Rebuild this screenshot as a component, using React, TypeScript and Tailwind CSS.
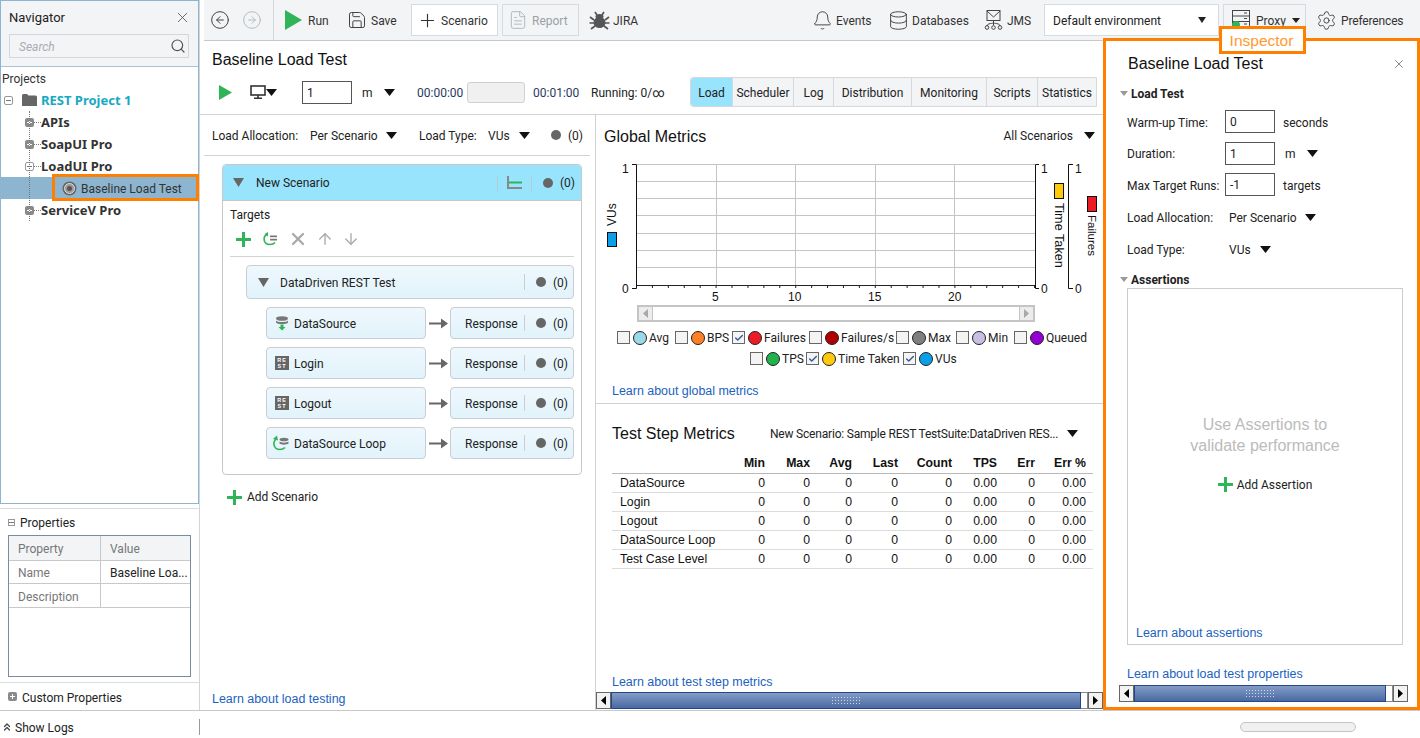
import React from "react";
import { Bell, Database, Settings, Save, Plus, FileText, CircleArrowLeft, CircleArrowRight, Search, X, ArrowUp, ArrowDown, ChevronsUp, Check } from "lucide-react";

const T = ({ className = "", children }: { className?: string; children: React.ReactNode }) => (
  <span className={"pt-[2px] " + className}>{children}</span>
);
const Caret = ({ className = "" }: { className?: string }) => (
  <svg width="11" height="7" viewBox="0 0 11 7" className={"shrink-0 " + className}><polygon points="0,0 11,0 5.5,7" fill="#111" /></svg>
);
const GrayTri = () => (
  <svg width="11" height="9" viewBox="0 0 11 9" className="shrink-0"><polygon points="0,0 11,0 5.5,9" fill="#666" /></svg>
);
const SmallTri = () => (
  <svg width="8" height="5" viewBox="0 0 8 5" className="shrink-0"><polygon points="0,0 8,0 4,5" fill="#999" /></svg>
);
const Dot = () => <span className="w-[10px] h-[10px] rounded-full bg-[#666] shrink-0" />;
const Count = ({ flat = false, gap = "gap-[7px]" }: { flat?: boolean; gap?: string }) => (
  <span className={"flex items-center text-[#222] " + gap}>
    <Dot />
    <span className={flat ? "" : "pt-[2px]"}>(0)</span>
  </span>
);
const Link = ({ children }: { children: React.ReactNode }) => (
  <span className="font-['Liberation_Sans',sans-serif] text-[12.45px] leading-[16px] text-[#1a62c0] whitespace-nowrap">{children}</span>
);
const TreeBox = ({ minus = false, dark = true }: { minus?: boolean; dark?: boolean }) => (
  <span className={"w-[9px] h-[9px] rounded-[2px] flex items-center justify-center shrink-0 " + (minus ? "bg-white border border-[#999] " : "") + (dark && !minus ? "bg-[#8a8a8a]" : "")}>
    <svg width="7" height="7" viewBox="0 0 7 7">
      <rect x="1" y="3" width="5" height="1" fill={minus ? "#777" : "#fff"} />
      {!minus && <rect x="3" y="1" width="1" height="5" fill="#fff" />}
    </svg>
  </span>
);
const RestIcon = () => (
  <span className="w-[14px] h-[14px] bg-[#666] text-white text-[5.5px] font-bold leading-[6.5px] flex flex-col items-center justify-center shrink-0 font-['Liberation_Sans',sans-serif] tracking-[1px]">
    <span>RE</span>
    <span>ST</span>
  </span>
);
const DsIcon = () => (
  <svg width="14" height="15" viewBox="0 0 14 15" className="shrink-0">
    <ellipse cx="7" cy="2.5" rx="6" ry="2.3" fill="#777" />
    <path d="M1 4.5 C2 6.5 12 6.5 13 4.5 V6.5 C12 8.5 2 8.5 1 6.5Z" fill="#777" />
    <path d="M5.5 8.5 H8.5 V11 H10.5 L7 14.5 L3.5 11 H5.5Z" fill="#2fb457" />
  </svg>
);
const LoopIcon = () => (
  <svg width="17" height="16" viewBox="0 0 17 16" className="shrink-0">
    <path d="M4 4 C0 8 2 14.5 8 14.5 C10.5 14.5 12 13.5 13 12.5" fill="none" stroke="#2fb457" strokeWidth="1.6" />
    <polygon points="1,4 5,0.5 6,5.5" fill="#2fb457" />
    <ellipse cx="12" cy="4.5" rx="4.5" ry="1.8" fill="#777" />
    <path d="M7.5 6.5 C9 8 15 8 16.5 6.5 V8.5 C15 10 9 10 7.5 8.5Z" fill="#777" />
  </svg>
);
const TargetLoop = () => (
  <svg width="16" height="14" viewBox="0 0 16 14" className="shrink-0">
    <path d="M5 2.5 C1 4 0.5 12.5 8 12.5 C10 12.5 12 11.8 13 10.5" fill="none" stroke="#2fb457" strokeWidth="1.6" />
    <polygon points="2.5,2 6,0 6,4.5" fill="#2fb457" />
    <rect x="8" y="3.5" width="7" height="1.7" fill="#777" />
    <rect x="8" y="6.8" width="7" height="1.7" fill="#777" />
  </svg>
);
const BugIcon = () => (
  <svg width="21" height="19" viewBox="0 0 21 19" className="shrink-0" fill="#555" stroke="#555">
    <ellipse cx="10.5" cy="11.5" rx="6" ry="5.5" stroke="none" />
    <ellipse cx="10.5" cy="5.5" rx="4" ry="2.5" stroke="none" />
    <path d="M6 1 L8 4 M15 1 L13 4 M1 6 L5 9 M20 6 L16 9 M0.5 12 H5 M20.5 12 H16 M2 18 L6 15 M19 18 L15 15" strokeWidth="1.7" fill="none" />
  </svg>
);
const JmsIcon = () => (
  <svg width="19" height="20" viewBox="0 0 19 20" className="shrink-0" fill="none" stroke="#444" strokeWidth="1">
    <rect x="3" y="0.5" width="13" height="10" />
    <path d="M3 1 L9.5 7 L16 1" />
    <path d="M9.5 10.5 V15 M3 16 C3 13 9.5 13.5 9.5 13 C9.5 13.5 16 13 16 16" />
    <circle cx="3" cy="17.5" r="1.8" />
    <circle cx="9.5" cy="17.5" r="1.8" />
    <circle cx="16" cy="17.5" r="1.8" />
  </svg>
);
const ProxyIcon = () => (
  <span className="relative w-[18px] h-[20px] shrink-0">
    <svg width="18" height="18" viewBox="0 0 18 18" fill="none" stroke="#444" strokeWidth="1">
      <rect x="0.5" y="0.5" width="17" height="17" />
      <path d="M0.5 6 H17.5 M0.5 11.5 H17.5 M12 3 H15 M12 8.5 H15 M12 14 H15" />
    </svg>
    <span className="absolute left-0 top-[11px] w-[8px] h-[8px] rounded-full bg-[#2fb457]" />
  </span>
);
const ArrowRightIcon = () => (
  <svg width="19" height="11" viewBox="0 0 19 11" className="shrink-0"><path d="M0 4.5 H12 V0.5 L19 5.5 L12 10.5 V6.5 H0Z" fill="#666" /></svg>
);
const GreenPlus = ({ s = 15 }: { s?: number }) => (
  <svg width={s} height={s} viewBox="0 0 15 15" className="shrink-0"><path d="M6 0 H9 V6 H15 V9 H9 V15 H6 V9 H0 V6 H6Z" fill="#2fb457" /></svg>
);

const BlueScrollbar = ({ grip }: { grip: string }) => (
  <div className="flex h-[17px] items-stretch">
    <div className="w-[15px] border border-[#666] bg-[#f2f2f2] flex items-center justify-center shrink-0">
      <svg width="5" height="9" viewBox="0 0 5 9"><polygon points="5,0 5,9 0,4.5" fill="#000" /></svg>
    </div>
    <div className="flex-1 bg-gradient-to-b from-[#849cc6] to-[#4a6aa2] border border-[#24478a] flex items-center justify-center">
      <div className={grip + " h-[10px] bg-[radial-gradient(#cdd8ec_1px,transparent_1px)] bg-[length:3px_3px]"} />
    </div>
    <div className="w-[7px] bg-white border-y border-r border-[#888] shrink-0" />
    <div className="w-[15px] border border-[#666] bg-[#f2f2f2] flex items-center justify-center shrink-0">
      <svg width="5" height="9" viewBox="0 0 5 9"><polygon points="0,0 0,9 5,4.5" fill="#000" /></svg>
    </div>
  </div>
);

const ToolItem = ({ className = "", icon, label }: { className?: string; icon: React.ReactNode; label: string }) => (
  <div className={"flex items-center h-[32px] shrink-0 " + className}>
    {icon}
    <T className="text-[#333]">{label}</T>
  </div>
);

const Toolbar = () => (
  <div className="h-[41px] ml-[4px] bg-[#f3f4f6] border-b border-[#c8c8c8] flex items-center pr-[18px] shrink-0">
    <CircleArrowLeft size={20} strokeWidth={1.2} className="ml-[6px] text-[#444] shrink-0" />
    <CircleArrowRight size={20} strokeWidth={1.2} className="ml-[12px] text-[#b3bcc4] shrink-0" />
    <div className="w-px h-[40px] bg-[#d4d8dc] ml-[11px]" />
    <ToolItem className="ml-[11px] w-[44px] gap-[6px]" icon={<svg width="17" height="20" viewBox="0 0 17 20" className="shrink-0"><polygon points="0,0 17,10 0,20" fill="#2fb457" /></svg>} label="Run" />
    <ToolItem className="ml-[20px] w-[46px] gap-[4px]" icon={<Save size={20} strokeWidth={1.2} className="text-[#444] -ml-[2px] shrink-0" />} label="Save" />
    <div className="ml-[16px] w-[87px] h-[32px] bg-white border border-[#d5dbe3] flex items-center pl-[5px] gap-[3px] text-[#333] shrink-0">
      <Plus size={21} strokeWidth={1.3} className="text-[#333] shrink-0" />
      <T>Scenario</T>
    </div>
    <div className="ml-[4px] w-[77px] h-[32px] border border-[#d5dbe3] flex items-center pl-[5px] gap-[4px] text-[#9aa0a6] shrink-0">
      <FileText size={20} strokeWidth={1.1} className="text-[#aab4c0] shrink-0" />
      <T>Report</T>
    </div>
    <ToolItem className="ml-[10px] w-[46px] gap-[3px]" icon={<BugIcon />} label="JIRA" />
    <ToolItem className="ml-auto w-[56px] gap-[3px]" icon={<Bell size={21} strokeWidth={1.1} className="text-[#444] -ml-[2px] shrink-0" />} label="Events" />
    <ToolItem className="ml-[20px] w-[75px] gap-[3px]" icon={<Database size={21} strokeWidth={1.1} className="text-[#444] -ml-[2px] shrink-0" />} label="Databases" />
    <ToolItem className="ml-[19px] w-[45px] gap-[4px]" icon={<JmsIcon />} label="JMS" />
    <div className="ml-[15px] w-[175px] h-[32px] bg-white border border-[#d5dbe3] flex items-center justify-between pl-[8px] pr-[12px] text-[#222] shrink-0">
      <T>Default environment</T>
      <svg width="8" height="6" viewBox="0 0 8 6" className="shrink-0"><polygon points="0,0 8,0 4,6" fill="#222" /></svg>
    </div>
    <div className="ml-[4px] w-[83px] h-[32px] border border-[#d5dbe3] flex items-center pl-[8px] gap-[6px] text-[#333] shrink-0">
      <ProxyIcon />
      <T>Proxy</T>
      <svg width="8" height="5" viewBox="0 0 8 5" className="shrink-0"><polygon points="0,0 8,0 4,5" fill="#222" /></svg>
    </div>
    <ToolItem className="ml-[12px] w-[84px] gap-[4px] tracking-[-0.15px]" icon={<Settings size={21} strokeWidth={1.1} className="text-[#444] -ml-[2px] shrink-0" />} label="Preferences" />
  </div>
);

const TreeRow = ({ box, minus, label }: { box?: boolean; minus?: boolean; label: string }) => (
  <div className="h-[22px] flex items-center font-bold text-[#333] pl-[24px] font-['Noto_Sans',sans-serif] text-[13px]">
    {box && <TreeBox minus={minus} />}
    <span className="w-[7px] border-t border-dotted border-[#777] shrink-0" />
    <span>{label}</span>
  </div>
);

const Navigator = () => (
  <div className="h-[504px] border border-[#8db4d0] flex flex-col shrink-0">
    <div className="h-[66px] bg-[#f3f4f6] border-b border-[#a9c3d6] shrink-0 pl-[8px] pr-[9px]">
      <div className="h-[33px] flex items-center justify-between">
        <span className="text-[13px] text-[#222]">Navigator</span>
        <X size={17} strokeWidth={1.2} className="text-[#555] -mr-[2px]" />
      </div>
      <div className="h-[24px] border border-[#d3d7dc] flex items-center justify-between px-[9px] pr-[2px]">
        <T className="italic text-[#a8adb3]">Search</T>
        <Search size={16} strokeWidth={1.8} className="text-[#555]" />
      </div>
    </div>
    <div className="relative flex-1">
      <div className="h-[22px] flex items-center pl-[1px] text-[#333]"><T>Projects</T></div>
      <div className="h-[22px] flex items-center pl-[3px]">
        <TreeBox minus />
        <svg width="15" height="12" viewBox="0 0 15 12" className="ml-[9px] shrink-0"><path d="M0 1.5 Q0 0 1.5 0 H5 L6.5 1.5 H13.5 Q15 1.5 15 3 V12 H0Z" fill="#666" /></svg>
        <span className="ml-[4px] font-bold text-[13px] text-[#17a9c4] font-['Noto_Sans',sans-serif]">REST Project 1</span>
      </div>
      <TreeRow box label="APIs" />
      <TreeRow box label="SoapUI Pro" />
      <TreeRow box minus label="LoadUI Pro" />
      <div className="relative h-[22px] bg-[#8db5cf] flex items-center pl-[61px] text-[#333] -mr-px">
        <svg width="15" height="15" viewBox="0 0 15 15" className="shrink-0">
          <circle cx="7.5" cy="7.5" r="7" fill="#666" />
          <circle cx="7.5" cy="7.5" r="5" fill="#9a9a9a" stroke="#ddd" strokeWidth="1" />
          <circle cx="7.5" cy="7.5" r="2.5" fill="#555" />
        </svg>
        <T className="ml-[4px]">Baseline Load Test</T>
        <div className="absolute left-[51px] -right-0 -top-[3px] -bottom-[2px] border-[3px] border-[#ff7f00]" />
      </div>
      <TreeRow box label="ServiceV Pro" />
      <div className="absolute left-[28px] top-[44px] h-[110px] border-l border-dotted border-[#777]" />
    </div>
  </div>
);

const PropRow = ({ a, b, h, head }: { a: string; b?: string; h: string; head?: boolean }) => (
  <div className={"flex border-b border-[#c8c8c8] " + h + (head ? " bg-[#f3f4f6]" : "")}>
    <div className="w-[92px] border-r border-[#c8c8c8] pl-[9px] flex items-center text-[#777]"><T>{a}</T></div>
    <div className={"flex-1 pl-[9px] flex items-center whitespace-nowrap " + (head ? "text-[#777]" : "text-[#222]")}><T>{b}</T></div>
  </div>
);

const LeftPanel = () => (
  <div className="w-[200px] h-[710px] border-r border-[#d0d5da] flex flex-col shrink-0">
    <Navigator />
    <div className="mt-[4px] h-[175px] border-t border-b border-[#d8dde2] shrink-0 pl-[8px] pr-[8px]">
      <div className="h-[26px] flex items-center gap-[5px] text-[#222]">
        <span className="w-[7px] h-[7px] border border-[#999] flex items-center justify-center shrink-0"><span className="w-[5px] h-px bg-[#777]" /></span>
        <T>Properties</T>
      </div>
      <div className="h-[142px] border border-[#7a8aa0]">
        <PropRow head a="Property" b="Value" h="h-[25px]" />
        <PropRow a="Name" b="Baseline Loa..." h="h-[23px]" />
        <PropRow a="Description" h="h-[24px]" />
      </div>
    </div>
    <div className="flex-1 flex items-center gap-[5px] pl-[8px] text-[#222]">
      <TreeBox />
      <T>Custom Properties</T>
    </div>
  </div>
);

const TitleBlock = () => (
  <div className="h-[74px] border-b border-[#d3d3d3] pt-[10px] shrink-0">
    <div className="pl-[12px] font-['Liberation_Sans',sans-serif] text-[16px] leading-[18px] text-[#111]">Baseline Load Test</div>
    <div className="mt-[8px] h-[30px] flex items-center text-[#222]">
      <svg width="13" height="15" viewBox="0 0 13 15" className="ml-[19px] shrink-0"><polygon points="0,0 13,7.5 0,15" fill="#2fb457" /></svg>
      <svg width="19" height="14" viewBox="0 0 19 14" className="ml-[18px] shrink-0" fill="none" stroke="#333" strokeWidth="1.6"><rect x="1" y="1" width="14" height="9" /><path d="M8 10 V13 M4 13.2 H12" /></svg>
      <Caret className="ml-[-3px]" />
      <div className="ml-[25px] w-[50px] h-[23px] border border-[#555] flex items-center pl-[4px] shrink-0"><T>1</T></div>
      <T className="ml-[10px] w-[22px] shrink-0">m</T>
      <Caret />
      <T className="ml-[22px] w-[42px] shrink-0 text-[#1f3a5f]">00:00:00</T>
      <div className="ml-[8px] w-[58px] h-[21px] rounded-[3px] bg-[#f0f0f0] border border-[#d0d0d0] shrink-0" />
      <T className="ml-[8px] w-[42px] shrink-0 text-[#1f3a5f]">00:01:00</T>
      <T className="ml-[16px] w-[72px] shrink-0 whitespace-nowrap">Running: 0/∞</T>
      <div className="ml-[27px] flex h-[30px] border border-[#d5d8dc] rounded-l-[3px]">
        {[
          ["Load", "w-[41px] bg-[#99e4fd] rounded-l-[3px]"],
          ["Scheduler", "w-[61px] bg-[#f3f4f6] border-l border-[#d5d8dc]"],
          ["Log", "w-[40px] bg-[#f3f4f6] border-l border-[#d5d8dc]"],
          ["Distribution", "w-[78px] bg-[#f3f4f6] border-l border-[#d5d8dc]"],
          ["Monitoring", "w-[75px] bg-[#f3f4f6] border-l border-[#d5d8dc]"],
          ["Scripts", "w-[51px] bg-[#f3f4f6] border-l border-[#d5d8dc]"],
          ["Statistics", "w-[59px] bg-[#f3f4f6] border-l border-[#d5d8dc]"],
        ].map(([t, c]) => (
          <div key={t} className={"flex items-center justify-center " + c}><T>{t}</T></div>
        ))}
      </div>
    </div>
  </div>
);

const StepRow = ({ icon, label }: { icon: React.ReactNode; label: string }) => (
  <div className="flex items-center ml-[20px] mt-[8px] h-[32px]">
    <div className="w-[160px] h-[32px] rounded-[4px] border border-[#c8ced3] bg-gradient-to-b from-[#eef8fd] to-[#e2f3fb] flex items-center shrink-0">
      <span className="w-[26px] flex justify-end shrink-0 pr-[4px]">{icon}</span>
      <T className="ml-[1px]">{label}</T>
    </div>
    <span className="ml-[3px]"><ArrowRightIcon /></span>
    <div className="ml-[2px] w-[124px] h-[32px] rounded-[4px] border border-[#c8ced3] bg-gradient-to-b from-[#eef8fd] to-[#e2f3fb] flex items-center shrink-0">
      <T className="ml-[14px] w-[59px]">Response</T>
      <span className="w-px h-[16px] bg-[#c8ced3] mr-[11px]" />
      <Count />
    </div>
  </div>
);

const LoadColumn = () => (
  <div className="w-[396px] border-r border-[#d0d0d0] flex flex-col shrink-0 text-[#222]">
    <div className="h-[41px] ml-[4px] mr-[5px] border-b border-[#d3d3d3] flex items-center pl-[8px] shrink-0">
      <T className="w-[98px] shrink-0">Load Allocation:</T>
      <T className="w-[76px] shrink-0">Per Scenario</T>
      <Caret />
      <T className="ml-[22px] w-[69px] shrink-0">Load Type:</T>
      <T className="w-[31px] shrink-0">VUs</T>
      <Caret />
      <span className="ml-[21px]"><Count /></span>
    </div>
    <div className="ml-[22px] mt-[8px] w-[360px] h-[311px] border border-[#c8c8c8] rounded-[4px] shrink-0 overflow-hidden">
      <div className="h-[36px] bg-[#99e4fd] border-b border-[#c8c8c8] flex items-center pl-[10px]">
        <GrayTri />
        <span className="ml-[12px] w-[241px]">New Scenario</span>
        <span className="w-px h-[16px] bg-[#b5ccd4]" />
        <svg width="15" height="13" viewBox="0 0 15 13" className="ml-[9px] shrink-0"><path d="M1 0 V12 H15" fill="none" stroke="#888" strokeWidth="2" /><path d="M2 6.5 H15" stroke="#2fb457" strokeWidth="2" /></svg>
        <span className="ml-[9px] w-px h-[16px] bg-[#b5ccd4]" />
        <span className="ml-[11px]"><Count flat /></span>
      </div>
      <div className="pl-[7px] pr-[7px]">
        <div className="h-[18px] mt-[5px] flex items-center text-[#222]">Targets</div>
        <div className="h-[30px] border-b border-[#d3d3d3] flex items-center pl-[6px] pb-[5px] mt-[3px]">
          <GreenPlus />
          <span className="ml-[11px]"><TargetLoop /></span>
          <X size={20} strokeWidth={2.8} className="text-[#aaa] ml-[10px] shrink-0" />
          <ArrowUp size={18} strokeWidth={1.8} className="text-[#aaa] ml-[8px] shrink-0" />
          <ArrowDown size={18} strokeWidth={1.8} className="text-[#aaa] ml-[8px] shrink-0" />
        </div>
        <div className="mt-[8px] ml-[16px] h-[34px] rounded-[4px] border border-[#c8ced3] bg-gradient-to-b from-[#eef8fd] to-[#e2f3fb] flex items-center pl-[11px]">
          <GrayTri />
          <T className="ml-[11px] w-[244px]">DataDriven REST Test</T>
          <span className="w-px h-[16px] bg-[#c8ced3] mr-[11px]" />
          <Count />
        </div>
        <div className="ml-[16px]">
          <StepRow icon={<DsIcon />} label="DataSource" />
          <StepRow icon={<RestIcon />} label="Login" />
          <StepRow icon={<RestIcon />} label="Logout" />
          <StepRow icon={<LoopIcon />} label="DataSource Loop" />
        </div>
      </div>
    </div>
    <div className="ml-[27px] mt-[14px] flex items-center gap-[5px] h-[16px]">
      <GreenPlus />
      <span>Add Scenario</span>
    </div>
    <div className="mt-auto mb-[3px] pl-[12px] h-[16px]"><Link>Learn about load testing</Link></div>
  </div>
);

const Chart = () => {
  const ticks = Array.from({ length: 26 }, (_, i) => 636.5 + 15.92 * i);
  return (
    <svg width="507" height="148" viewBox="596 157 507 148" className="block shrink-0" fontFamily="'Liberation Sans',sans-serif" fontSize="12" fill="#111">
      {[164.5, 181.5, 198.5, 215.5, 233.5, 250.5, 267.5].map((y) => (
        <line key={y} x1="637" x2="1035" y1={y} y2={y} stroke="#c4c4c4" />
      ))}
      {[716.5, 795.5, 875.5, 954.5].map((x) => (
        <line key={x} x1={x} x2={x} y1="164" y2="285" stroke="#c4c4c4" />
      ))}
      <line x1="637" x2="1035" y1="285.5" y2="285.5" stroke="#222" />
      {ticks.map((x) => (
        <line key={x} x1={x} x2={x} y1="285" y2="288" stroke="#222" />
      ))}
      <path d="M632 164.5 H636.5 V288.5 H632" fill="none" stroke="#111" />
      <path d="M1039 164.5 H1035.5 V288.5 H1039" fill="none" stroke="#111" />
      <path d="M1073 164.5 H1068.5 V288.5 H1073" fill="none" stroke="#111" />
      <text x="622" y="173">1</text>
      <text x="622" y="293">0</text>
      <text x="1041" y="173">1</text>
      <text x="1041" y="293">0</text>
      <text x="1075" y="173">1</text>
      <text x="1075" y="293">0</text>
      <text x="712" y="301">5</text>
      <text x="788" y="301">10</text>
      <text x="868" y="301">15</text>
      <text x="948" y="301">20</text>
      <rect x="607.5" y="232.5" width="9" height="14" fill="#0b9fe8" stroke="#111" />
      <text transform="translate(616 226) rotate(-90)">VUs</text>
      <rect x="1054.5" y="183.5" width="9" height="15" fill="#ffc90e" stroke="#111" />
      <text transform="translate(1055 203) rotate(90)" fontSize="12.7">Time Taken</text>
      <rect x="1087.5" y="196.5" width="9" height="15" fill="#ed1c24" stroke="#111" />
      <text transform="translate(1088 215) rotate(90)" fontSize="11.5">Failures</text>
    </svg>
  );
};

const LegendItem = ({ w, color, label, on = false }: { w: string; color: string; label: string; on?: boolean }) => (
  <div className={"flex items-center shrink-0 " + w}>
    <span className="w-[13px] h-[13px] border border-[#666] bg-[#f4f4f4] flex items-center justify-center shrink-0">
      {on && <Check size={10} strokeWidth={3.5} className="text-[#3b5a9a]" />}
    </span>
    <span className={"ml-[3px] w-[14px] h-[14px] rounded-full border border-[#222] shrink-0 " + color} />
    <span className="ml-[2px] text-[#222]">{label}</span>
  </div>
);

const cols = "grid grid-cols-[118px_35px_45px_42px_46px_54px_45px_38px_51px] pr-[7px] items-center border-b";

const GlobalMetrics = () => (
  <div className="h-[289px] border-b border-[#d0d0d0] shrink-0 flex flex-col">
    <div className="h-[42px] flex items-center justify-between pl-[8px] pr-[8px] pt-[1px] shrink-0">
      <span className="font-['Liberation_Sans',sans-serif] text-[16px] text-[#111]">Global Metrics</span>
      <span className="flex items-center gap-[11px] text-[#222] pb-[2px]">All Scenarios<Caret /></span>
    </div>
    <Chart />
    <div className="ml-[41px] w-[398px] h-[17px] border-2 border-[#c4c4c4] flex justify-between shrink-0">
      <div className="w-[14px] bg-[#ececec] border-r border-[#c4c4c4] flex items-center justify-center">
        <svg width="5" height="9" viewBox="0 0 5 9"><polygon points="5,0 5,9 0,4.5" fill="#a8a8a8" /></svg>
      </div>
      <div className="w-[14px] bg-[#ececec] border-l border-[#c4c4c4] flex items-center justify-center">
        <svg width="5" height="9" viewBox="0 0 5 9"><polygon points="0,0 0,9 5,4.5" fill="#a8a8a8" /></svg>
      </div>
    </div>
    <div className="mt-[6px] h-[19px] flex items-center pl-[21px]">
      <LegendItem w="w-[58px]" color="bg-[#99d9ea]" label="Avg" />
      <LegendItem w="w-[57px]" color="bg-[#ff7f27]" label="BPS" />
      <LegendItem w="w-[77px]" color="bg-[#ed1c24]" label="Failures" on />
      <LegendItem w="w-[87px]" color="bg-[#b00000]" label="Failures/s" />
      <LegendItem w="w-[60px]" color="bg-[#7f7f7f]" label="Max" />
      <LegendItem w="w-[58px]" color="bg-[#c8bfe7]" label="Min" />
      <LegendItem w="w-[76px]" color="bg-[#9400d3]" label="Queued" />
    </div>
    <div className="mt-[2px] h-[19px] flex items-center pl-[154px]">
      <LegendItem w="w-[56px]" color="bg-[#22b14c]" label="TPS" />
      <LegendItem w="w-[97px]" color="bg-[#ffc90e]" label="Time Taken" on />
      <LegendItem w="w-[56px]" color="bg-[#0b9fe8]" label="VUs" on />
    </div>
    <div className="mt-[15px] pl-[16px] h-[16px]"><Link>Learn about global metrics</Link></div>
  </div>
);

const StepMetrics = () => (
  <div className="flex-1 flex flex-col min-h-0">
    <div className="h-[50px] flex items-start pl-[16px] pt-[21px] shrink-0">
      <span className="font-['Liberation_Sans',sans-serif] text-[16px] leading-[18px] text-[#111] w-[158px] shrink-0">Test Step Metrics</span>
      <span className="text-[#222] leading-[18px] w-[297px] shrink-0 whitespace-nowrap tracking-[-0.2px]">New Scenario: Sample REST TestSuite:DataDriven RES...</span>
      <Caret className="mt-[5px]" />
    </div>
    <div className="ml-[16px] w-[481px] font-['Liberation_Sans',sans-serif] text-[12.25px] text-[#111]">
      <div className={cols + " h-[20px] pb-[2px] border-[#b8b8b8] font-bold text-right"}>
        <span />
        <span>Min</span><span>Max</span><span>Avg</span><span>Last</span><span>Count</span><span>TPS</span><span>Err</span><span>Err %</span>
      </div>
      {["DataSource", "Login", "Logout", "DataSource Loop", "Test Case Level"].map((n) => (
        <div key={n} className={cols + " h-[19px] border-[#dcdcdc] text-right"}>
          <span className="pl-[8px] text-left whitespace-nowrap">{n}</span>
          <span>0</span><span>0</span><span>0</span><span>0</span><span>0</span><span>0.00</span><span>0</span><span>0.00</span>
        </div>
      ))}
    </div>
    <div className="mt-auto pl-[16px] h-[16px] mb-[2px]"><Link>Learn about test step metrics</Link></div>
    <div className="mb-[1px]"><BlueScrollbar grip="w-[30px]" /></div>
  </div>
);

const FormRow = ({ label, mt, flat = false, children }: { label: string; mt: string; flat?: boolean; children: React.ReactNode }) => (
  <div className={"flex items-center h-[23px] " + mt}>
    <span className={"w-[98px] shrink-0 " + (flat ? "" : "pt-[2px]")}>{label}</span>
    {children}
  </div>
);
const Field = ({ v }: { v: string }) => (
  <div className="w-[50px] h-[23px] border border-[#555] flex items-center pl-[4px] shrink-0">{v}</div>
);

const Inspector = () => (
  <div className="relative z-10 w-[317px] h-[672px] -mt-[3px] border-[3px] border-[#ff7f00] bg-white flex flex-col shrink-0 text-[#222]">
    <div className="absolute left-[113px] -top-[15px] w-[87px] h-[28px] border-[3px] border-[#ff7f00] bg-white flex items-center justify-center pr-[2px] pt-[2px] font-['Liberation_Sans',sans-serif] text-[15.5px] text-[#ff9a2e]">Inspector</div>
    <div className="mt-[14px] h-[18px] pl-[22px] pr-[11px] flex items-center justify-between shrink-0">
      <span className="font-['Liberation_Sans',sans-serif] text-[16px] text-[#111]">Baseline Load Test</span>
      <X size={14} strokeWidth={1.7} className="text-[#888]" />
    </div>
    <div className="mt-[12px] h-[16px] pl-[14px] flex items-center gap-[3px] shrink-0 font-bold text-[#222]">
      <SmallTri />
      <T>Load Test</T>
    </div>
    <div className="pl-[21px]">
      <FormRow label="Warm-up Time:" mt="mt-[9px]"><Field v="0" /><T className="ml-[8px]">seconds</T></FormRow>
      <FormRow flat label="Duration:" mt="mt-[9px]"><Field v="1" /><span className="ml-[10px] w-[22px]">m</span><Caret /></FormRow>
      <FormRow label="Max Target Runs:" mt="mt-[8px]"><Field v="-1" /><T className="ml-[8px]">targets</T></FormRow>
      <FormRow flat label="Load Allocation:" mt="mt-[10px]"><span className="ml-[4px] w-[76px] shrink-0">Per Scenario</span><Caret /></FormRow>
      <FormRow flat label="Load Type:" mt="mt-[9px]"><span className="ml-[4px] w-[31px] shrink-0">VUs</span><Caret /></FormRow>
    </div>
    <div className="mt-[10px] h-[16px] pl-[14px] flex items-center gap-[3px] shrink-0 font-bold text-[#222]">
      <SmallTri />
      <T>Assertions</T>
    </div>
    <div className="mt-[1px] ml-[21px] w-[276px] h-[357px] border border-[#cccccc] flex flex-col items-center shrink-0">
      <div className="pt-[125px] font-['Liberation_Sans',sans-serif] text-[16px] leading-[21px] text-[#bbbbbb] text-center">
        <div>Use Assertions to</div>
        <div>validate performance</div>
      </div>
      <div className="mt-[20px] h-[16px] flex items-center gap-[4px]">
        <GreenPlus />
        <T>Add Assertion</T>
      </div>
      <div className="mt-auto mb-[3px] self-start pl-[8px] h-[16px]"><Link>Learn about assertions</Link></div>
    </div>
    <div className="mt-[21px] ml-[21px] h-[16px] shrink-0"><Link>Learn about load test properties</Link></div>
    <div className="mt-[3px] ml-[13px] w-[289px] shrink-0"><BlueScrollbar grip="w-[30px]" /></div>
  </div>
);

export default function App() {
  return (
    <div className="w-[1420px] h-[738px] overflow-hidden bg-white flex flex-col font-['Roboto',sans-serif] text-[12px] leading-[16px]">
      <div className="h-[710px] flex shrink-0">
        <LeftPanel />
        <div className="flex-1 flex flex-col min-w-0">
          <Toolbar />
          <div className="flex-1 flex min-h-0">
            <div className="w-[903px] flex flex-col shrink-0 min-h-0">
              <TitleBlock />
              <div className="flex-1 flex min-h-0">
                <LoadColumn />
                <div className="flex-1 flex flex-col min-w-0">
                  <GlobalMetrics />
                  <StepMetrics />
                </div>
              </div>
            </div>
            <Inspector />
          </div>
        </div>
      </div>
      <div className="flex-1 border-t border-[#c8c8c8] flex items-center text-[#222] pt-[5px]">
        <div className="w-[200px] h-[16px] border-r border-[#999] flex items-center pl-[1px] gap-[2px] shrink-0">
          <ChevronsUp size={12} strokeWidth={2.5} className="text-[#444]" />
          <T>Show Logs</T>
        </div>
        <div className="ml-[1040px] w-[116px] h-[10px] rounded-full border border-[#c4c4c4] bg-[#f0f0f0]" />
      </div>
    </div>
  );
}
